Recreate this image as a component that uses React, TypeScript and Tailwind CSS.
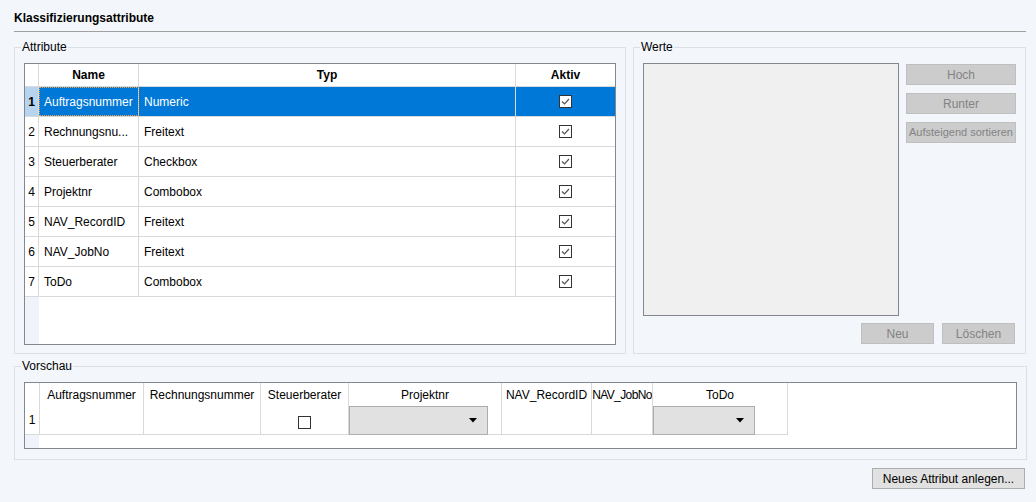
import React from 'react'

const FONT = { fontFamily: '"Liberation Sans", Arial, sans-serif' }

const ROWS = [
  { name: 'Auftragsnummer', typ: 'Numeric' },
  { name: 'Rechnungsnu...', typ: 'Freitext' },
  { name: 'Steuerberater', typ: 'Checkbox' },
  { name: 'Projektnr', typ: 'Combobox' },
  { name: 'NAV_RecordID', typ: 'Freitext' },
  { name: 'NAV_JobNo', typ: 'Freitext' },
  { name: 'ToDo', typ: 'Combobox' },
]

const PREVIEW_COLS = [
  { h: 'Auftragsnummer', w: 'w-[104px]' },
  { h: 'Rechnungsnummer', w: 'w-[117px]' },
  { h: 'Steuerberater', w: 'w-[88px]', check: true },
  { h: 'Projektnr', w: 'w-[153px]', combo: 'w-[139px]' },
  { h: 'NAV_RecordID', w: 'w-[90px]' },
  { h: 'NAV_JobNo', w: 'w-[61px]', tight: true },
  { h: 'ToDo', w: 'w-[135px]', combo: 'w-[102px]' },
]

function Check({ checked = true }: { checked?: boolean }) {
  return (
    <span className="inline-flex w-[13px] h-[13px] border border-[#333333] bg-white items-center justify-center">
      {checked && (
        <svg width="9" height="9" viewBox="0 0 9 9">
          <path d="M1 4.5 L3.5 7 L8 2" fill="none" stroke="#555555" strokeWidth="1.2" />
        </svg>
      )}
    </span>
  )
}

function Combo({ width }: { width: string }) {
  return (
    <div className={`${width} h-[29px] bg-[#e1e1e1] border border-[#adadad] flex items-center justify-end pr-[10px]`}>
      <svg width="8" height="5" viewBox="0 0 8 5">
        <path d="M0 0 H8 L4 4.5 Z" fill="#000000" />
      </svg>
    </div>
  )
}

function DisabledButton({ label, className }: { label: string; className: string }) {
  return (
    <div className={`${className} bg-[#cccccc] border border-[#bfbfbf] text-[#838383] flex items-center justify-center whitespace-nowrap`}>
      {label}
    </div>
  )
}

export default function App() {
  return (
    <div className="w-[1036px] h-[502px] bg-[#f3f7fc] text-[12px] text-black overflow-hidden" style={FONT}>
      <div className="pl-[14px] pr-[10px] pt-[10px]">
        <div className="font-bold h-[16px] leading-[16px]">Klassifizierungsattribute</div>
        <div className="mt-[5px] border-t border-[#a0a0a0]" />
      </div>

      <div className="flex gap-[7px] pl-[14px] pr-[10px] mt-[8px]">
        {/* Attribute */}
        <fieldset className="w-[612px] h-[314px] shrink-0 border border-[#dcdfe3] px-[9px]">
          <legend className="ml-[-3px] px-px leading-[15px]">Attribute</legend>
          <div className="mt-[8px] w-[592px] h-[282px] border border-[#828790] bg-white flex flex-col">
            <div className="flex h-[23px] border-b border-[#d9d9d9] font-bold">
              <div className="w-[14px] border-r border-[#d9d9d9]" />
              <div className="w-[100px] border-r border-[#d9d9d9] flex items-center justify-center">Name</div>
              <div className="w-[377px] border-r border-[#d9d9d9] flex items-center justify-center">Typ</div>
              <div className="flex-1 flex items-center justify-center">Aktiv</div>
            </div>
            {ROWS.map((r, i) => {
              const sel = i === 0
              return (
                <div key={r.name} className={`flex h-[30px] border-b border-[#d9d9d9] ${sel ? 'bg-[#0078d7] text-white' : ''}`}>
                  <div className={`w-[14px] border-r border-[#d9d9d9] flex items-center justify-center text-black ${sel ? 'bg-[#b6d4ee] font-bold' : 'bg-white'}`}>
                    {i + 1}
                  </div>
                  <div className={`w-[100px] border-r border-[#d9d9d9] flex items-center pl-[5px] ${sel ? 'outline outline-1 outline-dotted outline-[#f5a040] -outline-offset-1' : ''}`}>
                    {r.name}
                  </div>
                  <div className="w-[377px] border-r border-[#d9d9d9] flex items-center pl-[5px]">{r.typ}</div>
                  <div className="flex-1 flex items-center justify-center">
                    <Check />
                  </div>
                </div>
              )
            })}
            <div className="flex flex-1">
              <div className="w-[14px] bg-[#f0f4fa]" />
              <div className="flex-1" />
            </div>
          </div>
        </fieldset>

        {/* Werte */}
        <fieldset className="w-[393px] h-[314px] shrink-0 border border-[#dcdfe3] pl-[9px]">
          <legend className="ml-[-3px] px-px leading-[15px]">Werte</legend>
          <div className="mt-[8px] flex gap-[7px]">
            <div className="w-[256px] h-[253px] border border-[#828790] bg-[#f0f0f0]" />
            <div className="flex flex-col gap-[8px] pt-px">
              <DisabledButton label="Hoch" className="w-[110px] h-[21px]" />
              <DisabledButton label="Runter" className="w-[110px] h-[21px]" />
              <DisabledButton label="Aufsteigend sortieren" className="w-[110px] h-[21px] text-[11px]" />
            </div>
          </div>
          <div className="flex justify-end gap-[8px] mt-[7px] pr-[10px]">
            <DisabledButton label="Neu" className="w-[73px] h-[21px]" />
            <DisabledButton label="Löschen" className="w-[73px] h-[21px]" />
          </div>
        </fieldset>
      </div>

      {/* Vorschau */}
      <div className="pl-[14px] pr-[10px] mt-[5px]">
        <fieldset className="w-[1012px] h-[101px] border border-[#dcdfe3] px-[9px]">
          <legend className="ml-[-3px] px-px leading-[15px]">Vorschau</legend>
          <div className="mt-[8px] w-[993px] h-[67px] border border-[#828790] bg-white flex flex-col">
            <div className="flex">
              <div className="w-[14px] flex flex-col">
                <div className="h-[23px]" />
                <div className="h-[29px] flex items-center justify-center border-b border-[#d9d9d9]">1</div>
              </div>
              {PREVIEW_COLS.map(c => (
                <div key={c.h} className={`${c.w} flex flex-col border-l border-[#d9d9d9]`}>
                  <div className={`h-[23px] flex items-center justify-center whitespace-nowrap ${c.tight ? 'tracking-[-0.6px]' : ''}`}>
                    {c.h}
                  </div>
                  <div className="h-[29px] border-b border-[#d9d9d9] flex items-center">
                    {c.check && (
                      <div className="w-full flex justify-center pt-[4px]">
                        <Check checked={false} />
                      </div>
                    )}
                    {c.combo && <Combo width={c.combo} />}
                  </div>
                </div>
              ))}
              <div className="border-l border-[#d9d9d9]" />
            </div>
            <div className="flex flex-1">
              <div className="w-[14px] bg-[#f0f4fa]" />
            </div>
          </div>
        </fieldset>
      </div>

      <div className="flex justify-end pr-[11px] mt-[8px]">
        <div className="w-[153px] h-[21px] bg-[#e1e1e1] border border-[#adadad] flex items-center justify-center whitespace-nowrap">
          Neues Attribut anlegen...
        </div>
      </div>
    </div>
  )
}
